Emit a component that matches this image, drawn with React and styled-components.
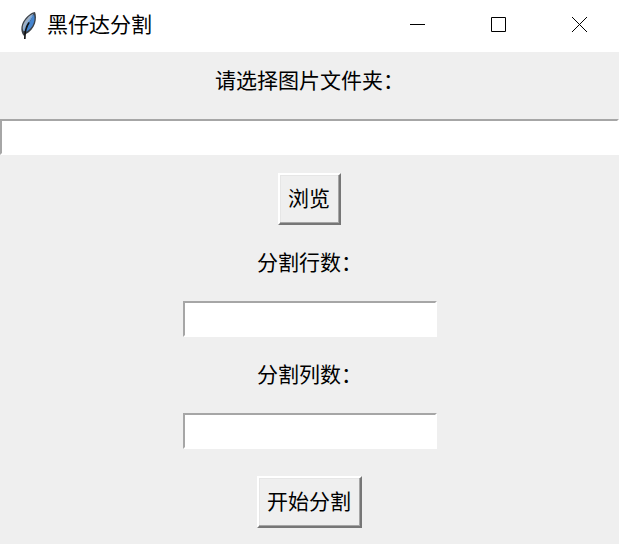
import React from 'react';
import styled, { createGlobalStyle } from 'styled-components';

const GlobalStyle = createGlobalStyle`
  *, *::before, *::after { box-sizing: border-box; }
  body {
    margin: 0;
    background: #efefef;
    color: #000;
    font: 21px/30px "Noto Sans CJK SC", sans-serif;
  }
`;

const Window = styled.div`
  display: flex;
  flex-direction: column;
  min-height: 100vh;
`;

const TitleBar = styled.header`
  display: flex;
  align-items: center;
  height: 52px;
  padding-left: 19px;
  background: #fff;
`;

const Title = styled.h1`
  flex: 1;
  margin: 0 0 6px 9px;
  font: inherit;
`;

const CaptionButton = styled.button`
  display: flex;
  align-items: center;
  justify-content: center;
  width: 81px;
  height: 48px;
  margin-bottom: 4px;
  padding: 0 0 0 2px;
  border: 0;
  background: transparent;
  color: #000;
`;

const Form = styled.form`
  display: flex;
  flex-direction: column;
  align-items: center;
  padding: 9px 0 16px;
`;

const Field = styled.div`
  display: flex;
  flex-direction: column;
  align-items: center;
  gap: 18px;
  width: 100%;
  margin-bottom: ${({ $last }) => ($last ? '27px' : '18px')};
`;

const Label = styled.label`
  padding-bottom: 4px;
  line-height: 36px;
`;

const Entry = styled.input`
  width: ${({ $wide }) => ($wide ? '100%' : '254px')};
  height: 36px;
  padding: 0 4px;
  border: 2px solid;
  border-color: #a6a6a6 #fff #fff #a6a6a6;
  border-radius: 0;
  background: #fff;
  font: inherit;
  outline: none;
`;

const PushButton = styled.button`
  height: 52px;
  margin-bottom: ${({ $last }) => ($last ? '0' : '18px')};
  padding: 0 9px 4px 8px;
  border: 2px solid;
  border-color: #fff #767676 #767676 #fff;
  border-radius: 0;
  box-shadow: inset -1px -1px #a6a6a6, inset 1px 1px #e6e6e6;
  background: #efefef;
  color: #000;
  font: inherit;
`;

function Feather() {
  return (
    <svg width="19" height="30" viewBox="0 0 19 30" aria-hidden="true">
      <path d="M16 1C10.500 2 5 8 3.200 13C1.800 17 2.200 20 3.500 23L5 25L7 23C11 21 14.500 17 16 12.500C17.400 8 17.200 4 16 1Z" fill="#3b4148" />
      <path d="M14.500 2.500C10 4.500 5.500 9.500 4 14.500C3.400 17 3.800 19 4.800 20.500C7 15 11 9 14.500 2.500Z" fill="#9fb0c4" />
      <path d="M14.800 3C12.500 9 8 14 6 21.500C10 19.500 13.500 16 14.700 12C15.900 8.500 15.800 5.500 14.800 3Z" fill="#4585cf" />
      <path d="M13.500 4.500C10.500 10 6.500 14 5.500 20" fill="none" stroke="#6ea5e2" strokeWidth="1.500" />
      <path d="M10 11.500C7 16 5.700 20 5.800 28" fill="none" stroke="#111" strokeWidth="1.600" />
    </svg>
  );
}

function CaptionIcon({ d }) {
  return (
    <svg width="15" height="15" viewBox="0 0 15 15" aria-hidden="true">
      <path d={d} fill="none" stroke="currentColor" />
    </svg>
  );
}

const CAPTION_BUTTONS = [
  { label: '最小化', d: 'M0 7.500H15' },
  { label: '最大化', d: 'M.5 .5H14.500V14.500H.5Z' },
  { label: '关闭', d: 'M0 0L15 15M15 0L0 15' },
];

export default function App() {
  return (
    <Window>
      <GlobalStyle />
      <TitleBar>
        <Feather />
        <Title>黑仔达分割</Title>
        {CAPTION_BUTTONS.map(({ label, d }) => (
          <CaptionButton key={label} type="button" aria-label={label}>
            <CaptionIcon d={d} />
          </CaptionButton>
        ))}
      </TitleBar>
      <Form onSubmit={(event) => event.preventDefault()}>
        <Field>
          <Label htmlFor="folder">请选择图片文件夹：</Label>
          <Entry id="folder" type="text" $wide />
        </Field>
        <PushButton type="button">浏览</PushButton>
        <Field>
          <Label htmlFor="rows">分割行数：</Label>
          <Entry id="rows" type="text" />
        </Field>
        <Field $last>
          <Label htmlFor="columns">分割列数：</Label>
          <Entry id="columns" type="text" />
        </Field>
        <PushButton type="submit" $last>开始分割</PushButton>
      </Form>
    </Window>
  );
}
